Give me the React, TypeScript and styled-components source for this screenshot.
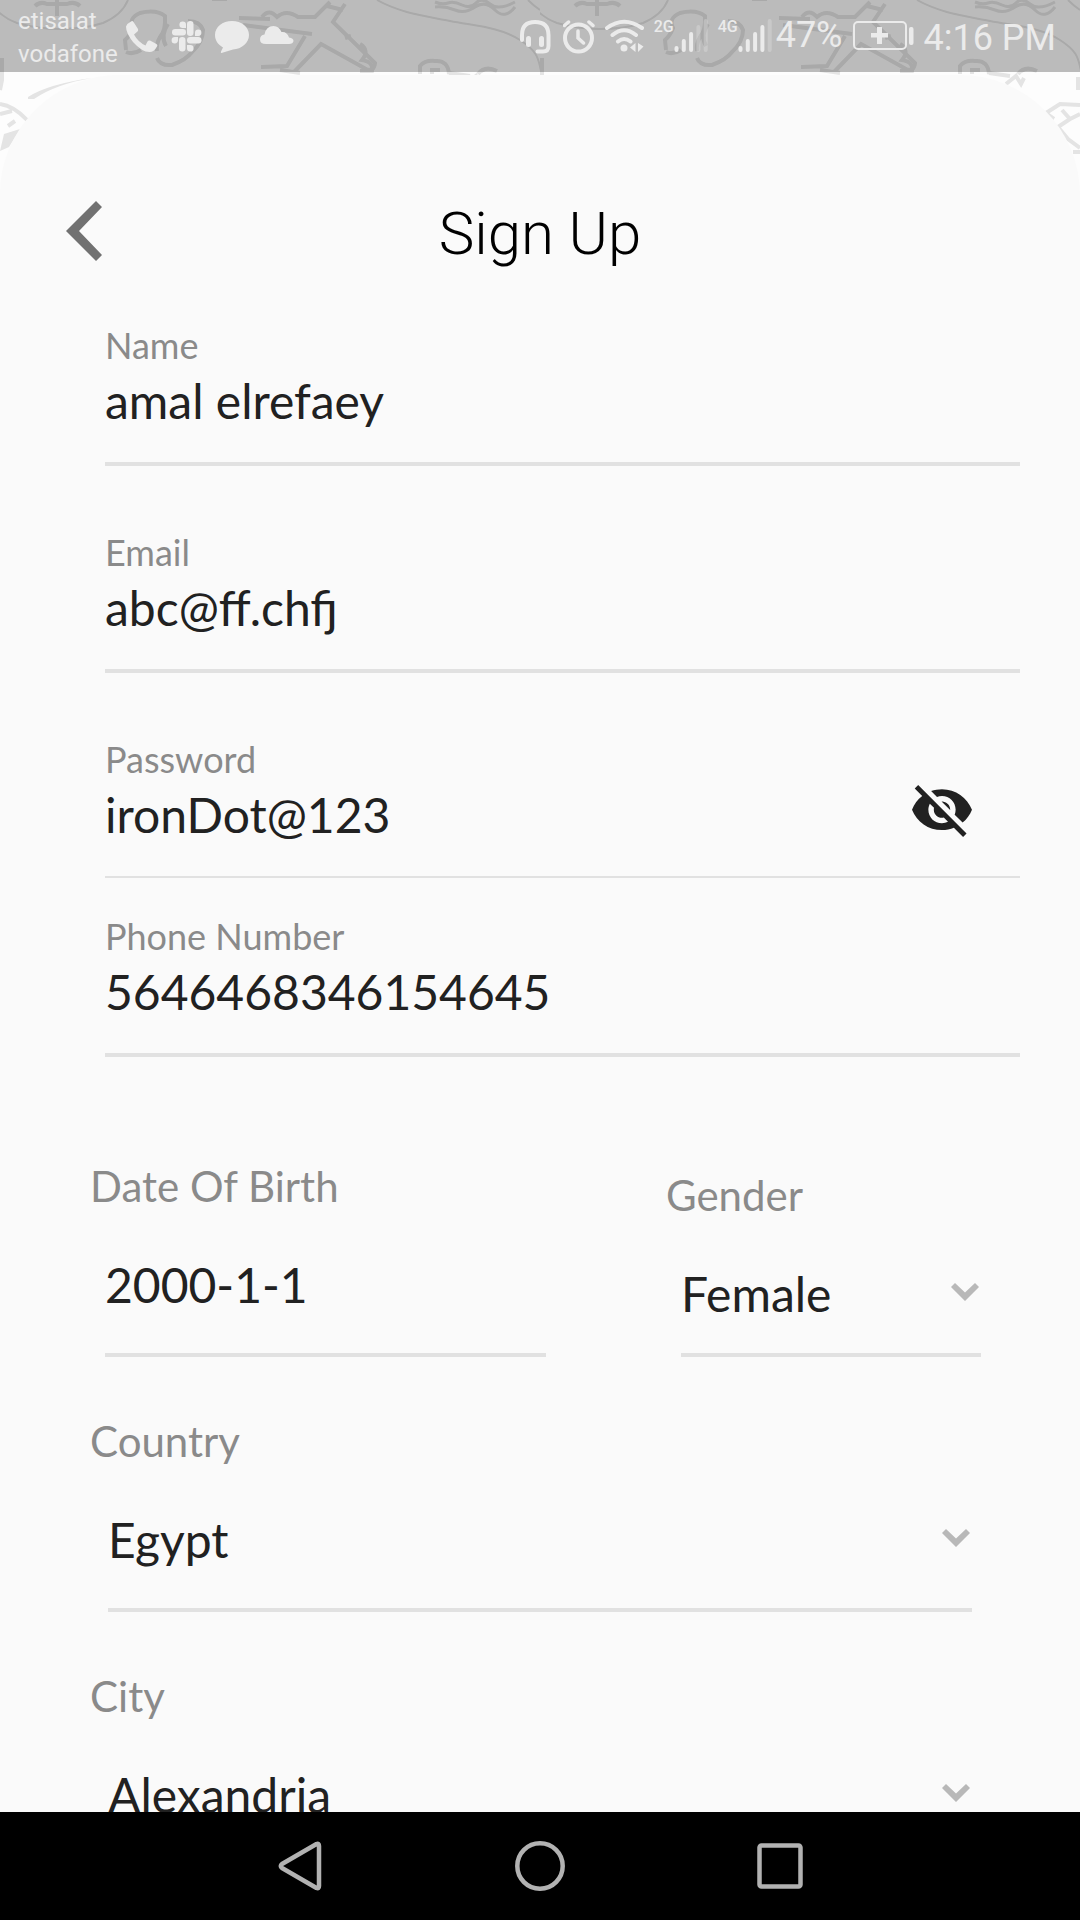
import React, { useState } from "react";
import styled, { createGlobalStyle } from "styled-components";

const color = {
  page: "#fdfdfd",
  sheet: "#fafafa",
  label: "#8a8a8a",
  value: "#212121",
  line: "#e1e1e1",
  status: "#ebebeb",
  map: "#e4e4e4",
};

const GlobalStyle = createGlobalStyle`
  * { box-sizing: border-box; }
  body { margin: 0; background: ${color.page}; font-family: Lato, "Open Sans", sans-serif; }
  button { padding: 0; border: 0; background: none; cursor: pointer; }
  svg { display: block; }
`;

const Screen = styled.div`
  position: relative;
  display: flex;
  flex-direction: column;
  height: 100vh;
  overflow: hidden;
`;

const MapBackdrop = styled.svg`
  position: absolute;
  top: 0;
  left: 0;
  width: 100%;
  height: 240px;
`;

/* ---------- status bar ---------- */

const StatusBar = styled.header`
  position: relative;
  display: flex;
  align-items: center;
  justify-content: space-between;
  flex: none;
  height: 72px;
  padding: 0 24px 0 18px;
  background: rgba(0, 0, 0, 0.26);
  color: ${color.status};
  font-family: Roboto, sans-serif;
`;

const StatusGroup = styled.div<{ $gap: number }>`
  display: flex;
  align-items: center;
  gap: ${(p) => p.$gap}px;
`;

const Carriers = styled.div`
  display: flex;
  flex-direction: column;
  padding-top: 3px;
  font-size: 24px;
  line-height: 33px;
`;

const StatusIcon = styled.svg`
  height: 36px;
  fill: ${color.status};
  stroke: none;
`;

const SignalBox = styled.div`
  display: flex;
  align-items: flex-start;
`;

const SignalTag = styled.span`
  width: 20px;
  font-size: 16px;
  font-weight: 500;
  line-height: 18px;
`;

const Percent = styled.span`
  font-size: 36px;
  line-height: 42px;
  padding-bottom: 2px;
`;

const Clock = styled.time`
  font-size: 36px;
  line-height: 42px;
  padding-top: 3px;
`;

/* ---------- sheet and form ---------- */

const Sheet = styled.main`
  position: relative;
  flex: 1;
  min-height: 0;
  margin-top: 3px;
  padding-top: 124px;
  overflow-y: auto;
  scrollbar-width: none;
  border-radius: 120px 120px 0 0;
  background: ${color.sheet};
`;

const TitleRow = styled.div`
  display: grid;
  grid-template-columns: 1fr auto 1fr;
  align-items: start;
  padding: 0 66px;
  margin-bottom: 54px;
`;

const BackButton = styled.button`
  justify-self: start;
  padding-top: 2px;
`;

const Title = styled.h1`
  margin: 0;
  font-family: Roboto, sans-serif;
  font-weight: 300;
  font-size: 60px;
  line-height: 70px;
  color: #000;
`;

const Form = styled.form`
  padding: 0 60px 0 90px;
`;

const TextFields = styled.div`
  padding-left: 15px;
`;

const Field = styled.div<{ $after: number }>`
  display: flex;
  flex-direction: column;
  gap: 4px;
  margin-bottom: ${(p) => p.$after}px;
`;

const SmallLabel = styled.label`
  font-size: 36px;
  line-height: 44px;
  color: ${color.label};
`;

const LargeLabel = styled.label`
  display: block;
  margin-bottom: 44px;
  font-size: 42px;
  line-height: 50px;
  color: ${color.label};
`;

const Underlined = styled.div<{ $pad?: number; $line?: number; $indent?: number }>`
  display: flex;
  align-items: flex-start;
  margin-left: ${(p) => p.$indent ?? 0}px;
  padding-bottom: ${(p) => p.$pad ?? 31}px;
  border-bottom: ${(p) => p.$line ?? 4}px solid ${color.line};
`;

const Input = styled.input`
  flex: 1;
  min-width: 0;
  width: 100%;
  height: 60px;
  padding: 0;
  border: 0;
  outline: 0;
  background: none;
  font-family: inherit;
  font-size: 48px;
  line-height: 60px;
  color: ${color.value};
`;

const EyeButton = styled.button`
  margin-right: 48px;
`;

const SplitRow = styled.div`
  display: grid;
  grid-template-columns: 456fr 315fr;
  column-gap: 120px;
  align-items: end;
  margin-right: 39px;
  margin-bottom: 59px;
`;

const WideRow = styled.div`
  margin-right: 48px;
  margin-bottom: 59px;
`;

const SelectCell = styled.div`
  flex: 1;
  display: grid;
  align-items: center;
  > * {
    grid-area: 1 / 1;
  }
`;

const Select = styled.select`
  appearance: none;
  width: 100%;
  height: 60px;
  padding: 0;
  border: 0;
  outline: 0;
  background: none;
  font-family: inherit;
  font-size: 48px;
  line-height: 60px;
  color: ${color.value};
`;

const Chevron = styled.svg`
  justify-self: end;
  width: 28px;
  height: 18px;
  margin: 0 2px 4px 0;
  fill: #b8b8b8;
  pointer-events: none;
`;

/* ---------- navigation bar ---------- */

const NavBar = styled.nav`
  position: relative;
  flex: none;
  display: flex;
  height: 108px;
  padding: 0 180px;
  background: #000;
`;

const NavButton = styled.button`
  flex: 1;
  display: flex;
  align-items: center;
  justify-content: center;
  svg {
    fill: none;
    stroke: #b2b2b2;
    stroke-width: 4.5;
    stroke-linejoin: round;
  }
`;

function TreasureMap() {
  return (
    <MapBackdrop aria-hidden="true">
      <defs>
        <pattern id="map" width="540" height="240" patternUnits="userSpaceOnUse">
          <g fill="none" stroke={color.map} strokeWidth="4">
            <g strokeWidth="2">
              <path d="M-12 0Q0 17 17 23Q38 29 60 29Q84 29 103 23Q122 15 128 0" />
              <path d="M528 0Q534 6 540 10" />
              <path d="M377 0C400 13 425 16 450 21S500 27 520 40S538 60 542 75" />
              <path d="M212 0H227" />
            </g>
            <path d="M57 0V16M35 6Q40 1 47 4H67Q75 1 80 6" />
            <path d="M126 50L125 40Q130 36 133 28Q128 18 140 13Q156 9 165 16Q166 30 160 37Q156 44 157 51M126 52Q133 55 141 50M168 24Q160 36 166 46M157 58Q160 66 172 65Q186 60 192 52Q203 42 203 30Q200 21 188 21" />
            <path d="M239 18L270 19M243 25L312 34M262 17Q269 8 277 17Q286 9 298 17H315L330 2M345 4L333 22L375 63Q374 72 366 69L321 44L294 72M305 36L287 66L261 67M280 70L300 73M327 6L343 10M351 36L345 38" />
            <path d="M360 44Q370 50 362 60Q374 62 372 71H360" />
            <path d="M435 2Q442 5 448 3T462 5T476 3T490 4T515 2M435 7Q445 6 455 10T475 7T495 10T515 7" strokeWidth="3" />
            <path d="M420 74V66Q425 60 435 61Q448 60 449 74M432 74V70H440M449 73L470 76M478 74Q485 65 497 71M466 84L476 76L481 84L484 78" />
            <path d="M2 58V80L0 90M538 77V90" />
            <path d="M0 104Q14 106 27 120M0 114L12 111M8 126L15 121M506 113L520 104L540 105M507 114L514 119M522 110L530 119L540 114M530 119L518 127L528 139L540 148M533 152H540" />
          </g>
          <g fill={color.map}>
            <path d="M28 97Q48 84 92 78Q56 84 34 99H28Z" />
            <path d="M4 134L20 129L9 147L0 151Z" />
          </g>
        </pattern>
      </defs>
      <rect width="100%" height="160" fill="url(#map)" />
    </MapBackdrop>
  );
}

function Signal({ tag, strength }: { tag: string; strength: number }) {
  return (
    <SignalBox>
      <SignalTag>{tag}</SignalTag>
      <StatusIcon viewBox="0 18 34 36" width="34" aria-hidden="true">
        {[6, 13, 20, 27, 33].map((h, i) => (
          <rect
            key={h}
            x={i * 7.3 + 0.5}
            y={52 - h}
            width="4"
            height={h}
            rx="2"
            opacity={i < strength ? 1 : 0.3}
          />
        ))}
      </StatusIcon>
    </SignalBox>
  );
}

const stroked = {
  fill: "none",
  stroke: color.status,
  strokeWidth: 4,
  strokeLinecap: "round" as const,
};

function Status() {
  return (
    <StatusBar>
      <StatusGroup $gap={8}>
        <Carriers>
          <span>etisalat</span>
          <span>vodafone</span>
        </Carriers>
        <StatusIcon viewBox="126 18 36 36" width="36" aria-hidden="true">
          <path d="M131 21.5Q132.500 20.500 133.500 22L138 29Q138.500 30.500 137.500 31.500L134 34.500Q138 42 145.500 45.500L147.500 41.500Q148.500 40 150 40.500L156.500 44Q158 45 157 46.500Q154 52 149.500 52Q142 52 133 42Q126 33 126 26.500Q127 23.500 131 21.500Z" />
        </StatusIcon>
        <StatusIcon viewBox="170 18 36 36" width="36" aria-hidden="true">
          <rect x="187" y="21" width="6.500" height="15" rx="3.200" />
          <rect x="172" y="29" width="14" height="6.500" rx="3.200" />
          <rect x="179" y="37" width="6.500" height="14.500" rx="3.200" />
          <rect x="187" y="37" width="14.500" height="6.500" rx="3.200" />
          <path d="M186 28h-3.200a3.300 3.300 0 1 1 3.200-3.300ZM195 36v-3.300a3.200 3.200 0 1 1 3.200 3.300ZM187 45h3.200a3.300 3.300 0 1 1-3.200 3.300ZM178 37v3.300a3.200 3.200 0 1 1-3.200-3.300Z" />
        </StatusIcon>
        <StatusIcon viewBox="214 18 38 36" width="38" aria-hidden="true">
          <path d="M232 21C241.500 21 249 27 249 35S241.500 49 233 49.500L221.500 53Q220.500 53 221 51.500L223 47.500C218 44.500 215 40.500 215 35C215 27 222.500 21 232 21Z" />
        </StatusIcon>
        <StatusIcon viewBox="260 18 36 36" width="36" aria-hidden="true">
          <path d="M266 44Q260 44 260 39.500Q260 35 264.500 34.500Q266 26 273.500 26Q279 26 281.500 32Q287 31.500 289 37.500Q293.500 38 293.500 41Q293 44 289 44Z" />
        </StatusIcon>
      </StatusGroup>

      <StatusGroup $gap={10}>
        <StatusIcon viewBox="521 18 33 36" width="33" aria-hidden="true">
          <path {...stroked} d="M523 40V35Q523 22 536 22Q549.500 22 549.500 35V46Q549.500 51.500 544 51.500H538.500" />
          <rect x="527" y="36" width="5" height="11" rx="2.500" />
          <rect x="540" y="36" width="5" height="11" rx="2.500" />
        </StatusIcon>
        <StatusIcon viewBox="564 18 32 36" width="32" aria-hidden="true">
          <circle {...stroked} cx="579.500" cy="38" r="13.500" />
          <path {...stroked} d="M579 31V38L584.500 43M565.500 25.500L569.500 22M590 22L594 25.500" strokeWidth="3.500" />
        </StatusIcon>
        <StatusIcon viewBox="606 18 39 36" width="39" aria-hidden="true">
          <path {...stroked} d="M608 28Q625 15.500 643 28M613.500 35Q625 25.500 637 35M619 41.500Q625 36.500 631.500 41.500" />
          <circle cx="625" cy="48" r="3.500" />
          <path d="M636.500 43V52L631 47.500ZM639 43L644.500 46.500L639 52Z" />
        </StatusIcon>
        <Signal tag="2G" strength={3} />
        <StatusGroup $gap={4}>
          <Signal tag="4G" strength={4} />
          <Percent>47%</Percent>
        </StatusGroup>
        <StatusIcon viewBox="853 18 61 36" width="61" aria-hidden="true">
          <rect {...stroked} strokeWidth="2" x="854" y="22" width="52" height="27" rx="4" />
          <path d="M877 27h5v6h6v4.500h-6v6.500h-5v-6.500h-6V33h6Z" />
          <rect x="909" y="27" width="4.500" height="18" rx="2" />
        </StatusIcon>
        <Clock>4:16 PM</Clock>
      </StatusGroup>
    </StatusBar>
  );
}

function TextField(props: {
  id: string;
  label: string;
  value: string;
  type?: string;
  after: number;
  line?: number;
  children?: React.ReactNode;
}) {
  return (
    <Field $after={props.after}>
      <SmallLabel htmlFor={props.id}>{props.label}</SmallLabel>
      <Underlined $line={props.line}>
        <Input
          id={props.id}
          type={props.type ?? "text"}
          defaultValue={props.value}
          spellCheck={false}
          autoComplete="off"
        />
        {props.children}
      </Underlined>
    </Field>
  );
}

function SelectField(props: {
  id: string;
  label: string;
  options: string[];
  indent: number;
  pad: number;
}) {
  return (
    <div>
      <LargeLabel htmlFor={props.id}>{props.label}</LargeLabel>
      <Underlined $indent={props.indent} $pad={props.pad}>
        <SelectCell>
          <Select id={props.id} defaultValue={props.options[0]}>
            {props.options.map((o) => (
              <option key={o}>{o}</option>
            ))}
          </Select>
          <Chevron viewBox="0 0 28 18" aria-hidden="true">
            <path d="M4 0L14 9.500L24 0L28 4L14 18L0 4Z" />
          </Chevron>
        </SelectCell>
      </Underlined>
    </div>
  );
}

export default function App() {
  const [visible, setVisible] = useState(true);

  return (
    <Screen>
      <GlobalStyle />
      <TreasureMap />
      <Status />
      <Sheet>
        <TitleRow>
          <BackButton type="button" aria-label="Back">
            <svg width="36" height="60" viewBox="0 0 36 60" fill="#717171">
              <path d="M30 0L36 6L13 30L36 54L30 60L0 30Z" />
            </svg>
          </BackButton>
          <Title>Sign Up</Title>
        </TitleRow>
        <Form>
          <TextFields>
            <TextField id="name" label="Name" value="amal elrefaey" after={64} />
            <TextField id="email" label="Email" value="abc@ff.chfj" after={64} />
            <TextField
              id="password"
              label="Password"
              value="ironDot@123"
              type={visible ? "text" : "password"}
              after={36}
              line={2}
            >
              <EyeButton
                type="button"
                aria-label="Toggle password visibility"
                onClick={() => setVisible(!visible)}
              >
                <svg width="60" height="52" viewBox="1 3 22 19" fill={color.value}>
                  <path d="M12 7c2.760 0 5 2.240 5 5 0 .65-.13 1.260-.36 1.830l2.920 2.920c1.510-1.260 2.700-2.890 3.430-4.750-1.730-4.390-6-7.500-11-7.500-1.400 0-2.740.25-3.980.7l2.160 2.160C10.740 7.130 11.350 7 12 7zM2 4.270l2.280 2.280.46.46C3.080 8.300 1.780 10.020 1 12c1.730 4.390 6 7.500 11 7.500 1.550 0 3.030-.3 4.380-.84l.42.42L19.730 22 21 20.730 3.270 3 2 4.270zM7.530 9.800l1.550 1.550c-.05.21-.08.43-.08.65 0 1.660 1.340 3 3 3 .22 0 .44-.03.65-.08l1.550 1.550c-.67.33-1.410.53-2.200.53-2.760 0-5-2.240-5-5 0-.79.2-1.530.53-2.200zm4.310-.78l3.150 3.150.02-.16c0-1.660-1.340-3-3-3l-.17.01z" />
                </svg>
              </EyeButton>
            </TextField>
            <TextField id="phone" label="Phone Number" value="5646468346154645" type="tel" after={104} />
          </TextFields>

          <SplitRow>
            <div>
              <LargeLabel htmlFor="dob">Date Of Birth</LargeLabel>
              <Underlined $indent={15} $pad={38}>
                <Input id="dob" type="text" defaultValue="2000-1-1" />
              </Underlined>
            </div>
            <SelectField id="gender" label="Gender" options={["Female", "Male"]} indent={15} pad={29} />
          </SplitRow>
          <WideRow>
            <SelectField id="country" label="Country" options={["Egypt"]} indent={18} pad={38} />
          </WideRow>
          <WideRow>
            <SelectField id="city" label="City" options={["Alexandria"]} indent={18} pad={38} />
          </WideRow>
        </Form>
      </Sheet>
      <NavBar>
        <NavButton type="button" aria-label="Back">
          <svg width="44" height="50" viewBox="0 0 44 50">
            <path d="M38.500 3Q41 2 41 5V45Q41 48 38.500 47L4 27Q1.500 25 4 23Z" />
          </svg>
        </NavButton>
        <NavButton type="button" aria-label="Home">
          <svg width="50" height="50" viewBox="0 0 50 50">
            <circle cx="25" cy="25" r="22.700" />
          </svg>
        </NavButton>
        <NavButton type="button" aria-label="Recent apps">
          <svg width="46" height="46" viewBox="0 0 46 46">
            <rect x="2.500" y="2.500" width="41" height="41" rx="2" />
          </svg>
        </NavButton>
      </NavBar>
    </Screen>
  );
}
